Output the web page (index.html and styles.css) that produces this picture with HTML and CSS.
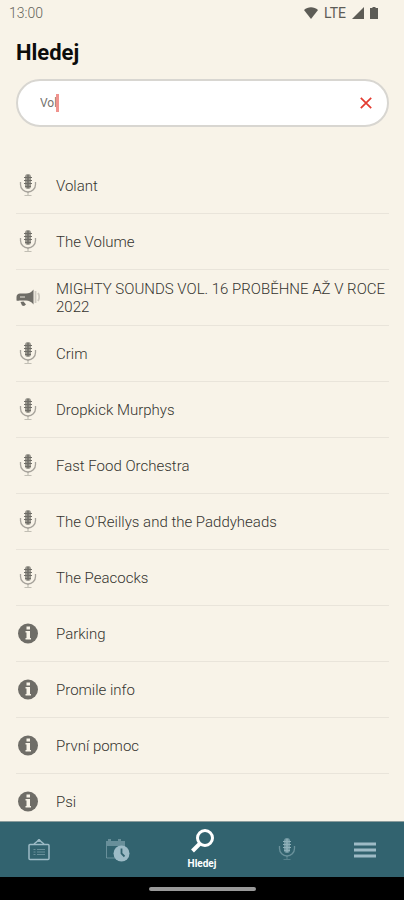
FILE: index.html
```
<!DOCTYPE html>
<html lang="cs">
<head>
<meta charset="utf-8">
<meta name="viewport" content="width=device-width, initial-scale=1">
<title>Hledej</title>
<link rel="stylesheet" href="styles.css">
</head>
<body>
<svg class="sprite" aria-hidden="true">
  <symbol id="mic" viewBox="0 0 24 24">
    <rect x="9" y="0" width="6" height="15" rx="3" fill="currentColor" opacity=".7"/>
    <path d="M12 1v13" stroke="currentColor" stroke-width="2" opacity=".7"/>
    <path d="M8 3.500h8M8 6.500h8M8 9.500h8M9 12.500h6" stroke="currentColor" stroke-width="1.200"/>
    <path d="M4.500 8v2.500a7.500 7.500 0 0 0 15 0V8" fill="none" stroke="currentColor" stroke-width="1.300" opacity=".6"/>
    <path d="M12 18v3.500M8.500 21.500h7" fill="none" stroke="currentColor" stroke-width="1.200" opacity=".4"/>
  </symbol>
  <symbol id="horn" viewBox="0 0 24 24">
    <path d="M4 7.500h6c3 0 5-1 7.500-4v15c-2.500-3-4.500-4-7.500-4H4c-1-.5-2 1-3.500 0V11C.5 9 2 7.500 4 7.500z" fill="currentColor"/>
    <path d="M4.500 16l3-.5 2.500 3-2 1.500-2-.5z" fill="currentColor"/>
    <path d="M4 11h5" stroke="#f8f3e8" stroke-width="1.500" opacity=".6"/>
    <path d="M19.500 5v12M22 7c1.500 2.500 1.500 5.500 0 8" fill="none" stroke="currentColor" stroke-width="1.800" opacity=".3"/>
  </symbol>
  <symbol id="info" viewBox="0 0 24 24">
    <circle cx="12" cy="11.500" r="10" fill="currentColor"/>
    <path d="M10.500 4.500h3.500v3h-3.500zM9.500 9h4.500v7h1v1.500H9.500V16h1v-5.500h-1z" fill="#f8f3e8"/>
  </symbol>
</svg>

<header class="status">
  <span>13:00</span>
  <span class="signals">
    <svg width="14" height="12" viewBox="0 0 14 12" aria-hidden="true"><path d="M0 3C4-.700 10-.700 14 3L7 12z" fill="#5d5c56"/></svg>
    <span class="network">LTE</span>
    <svg width="12" height="12" viewBox="0 0 12 12" aria-hidden="true"><path d="M12 0v12H0z" fill="#5d5c56"/></svg>
    <svg width="8" height="12" viewBox="0 0 8 12" aria-hidden="true"><path d="M2.500 0h3v1H8v11H0V1h2.500z" fill="#5d5c56"/></svg>
  </span>
</header>

<main class="content">
  <h1>Hledej</h1>
  <form class="search">
    <input type="text" id="query" value="Vol" aria-label="Hledej">
    <span class="caret"></span>
    <button type="button" class="clear" aria-label="Smazat">
      <svg width="12" height="12" viewBox="0 0 12 12" aria-hidden="true"><path d="M.8.800l10.400 10.400M11.200.800L.8 11.200" stroke="#e33b30" stroke-width="1.700"/></svg>
    </button>
  </form>
  <ul class="results">
    <li><svg class="icon"><use href="#mic"/></svg><span>Volant</span></li>
    <li><svg class="icon"><use href="#mic"/></svg><span>The Volume</span></li>
    <li><svg class="icon"><use href="#horn"/></svg><span>MIGHTY SOUNDS VOL. 16 PROBĚHNE AŽ V ROCE 2022</span></li>
    <li><svg class="icon"><use href="#mic"/></svg><span>Crim</span></li>
    <li><svg class="icon"><use href="#mic"/></svg><span>Dropkick Murphys</span></li>
    <li><svg class="icon"><use href="#mic"/></svg><span>Fast Food Orchestra</span></li>
    <li><svg class="icon"><use href="#mic"/></svg><span>The O'Reillys and the Paddyheads</span></li>
    <li><svg class="icon"><use href="#mic"/></svg><span>The Peacocks</span></li>
    <li><svg class="icon"><use href="#info"/></svg><span>Parking</span></li>
    <li><svg class="icon"><use href="#info"/></svg><span>Promile info</span></li>
    <li><svg class="icon"><use href="#info"/></svg><span>První pomoc</span></li>
    <li><svg class="icon"><use href="#info"/></svg><span>Psi</span></li>
  </ul>
</main>

<nav class="tabs">
  <a href="#news" aria-label="Novinky">
    <svg width="24" height="24" viewBox="0 0 24 24" fill="none" stroke="currentColor" aria-hidden="true"><rect x="2" y="6.500" width="20" height="15" rx="1" stroke-width="1.500"/><path d="M7 6l5-4 5 4" stroke-width="1.500"/><circle cx="12" cy="2.500" r="1.500" fill="currentColor" stroke="none"/><path d="M6.500 11.500h2M10 11.500h8M6.500 14h2M10 14h8M6.500 16.500h2M10 16.500h8" opacity=".5"/></svg>
  </a>
  <a href="#program" aria-label="Program">
    <svg width="26" height="24" viewBox="0 0 26 24" aria-hidden="true"><path d="M2 3h2V1h3v2h7V1h3v2h4v5H2z" fill="currentColor" opacity=".5"/><path d="M2.500 8v12h9M20.500 8v2" fill="none" stroke="currentColor" opacity=".5"/><circle cx="17.500" cy="15.500" r="8" fill="currentColor"/><path d="M17.500 10.500v5l3 3" fill="none" stroke="#32636f" stroke-width="1.800"/></svg>
  </a>
  <a href="#search" class="active">
    <svg width="24" height="24" viewBox="0 0 24 24" fill="none" stroke="currentColor" aria-hidden="true"><circle cx="15" cy="9" r="7.500" stroke-width="3"/><path d="M10 14.500L2.500 22" stroke-width="4"/></svg>
    <span>Hledej</span>
  </a>
  <a href="#artists" aria-label="Interpreti"><svg class="icon"><use href="#mic"/></svg></a>
  <a href="#menu" aria-label="Menu">
    <svg width="22" height="16" viewBox="0 0 22 16" aria-hidden="true"><path d="M0 2h22M0 8h22M0 14h22" stroke="currentColor" stroke-width="3"/></svg>
  </a>
</nav>
<footer class="system"><span class="handle"></span></footer>
</body>
</html>
```
FILE: styles.css
```
* { box-sizing: border-box; }

body {
  margin: 0;
  height: 100vh;
  display: flex;
  flex-direction: column;
  overflow: hidden;
  background: #f8f3e8;
  color: #35342f;
  font-family: Roboto, "Liberation Sans", sans-serif;
}

.sprite { position: absolute; width: 0; height: 0; }

.status {
  flex: none;
  display: flex;
  justify-content: space-between;
  align-items: center;
  height: 25px;
  padding: 0 26px 0 9px;
  font-size: 14px;
  font-weight: 300;
  color: #65635b;
}

.signals { display: flex; align-items: center; gap: 6px; }
.network { color: #5d5c56; font-weight: 400; }

.content {
  flex: 1;
  min-height: 0;
  overflow: hidden;
  padding: 14px 15px 0 16px;
}

h1 {
  margin: 0;
  font-size: 22px;
  line-height: 28px;
  font-weight: 700;
  color: #0c0c0b;
}

.search {
  display: flex;
  align-items: center;
  height: 48px;
  margin-top: 12px;
  padding: 0 15px 0 22px;
  background: #fff;
  border: 2px solid #d8d6d1;
  border-radius: 24px;
}

.search input {
  field-sizing: content;
  padding: 0;
  border: 0;
  outline: 0;
  background: none;
  color: #75736f;
  font: 12px/18px Roboto, "Liberation Sans", sans-serif;
}

.caret { width: 3px; height: 18px; margin-left: -1px; background: #f0938e; }

.clear {
  display: flex;
  margin-left: auto;
  padding: 0;
  border: 0;
  background: none;
}

.results { list-style: none; margin: 31px 0 0; padding: 0; }

.results li {
  display: flex;
  align-items: center;
  gap: 16px;
  height: 56px;
  border-bottom: 1px solid #e9e4da;
  font-size: 15px;
  line-height: 18px;
  font-weight: 300;
}

.icon { flex: none; width: 24px; height: 24px; color: #6f6d67; }

.tabs {
  flex: none;
  display: flex;
  height: 56px;
  background: #32636f;
  border-top: 1px solid #8b9c9c;
}

.tabs a {
  flex: 5;
  display: flex;
  flex-direction: column;
  align-items: center;
  justify-content: center;
  color: #9dbbc6;
  text-decoration: none;
}

.tabs .icon { color: #8fb0b9; }
.tabs .active { flex: 6; color: #fff; font-size: 10px; line-height: 14px; font-weight: 700; gap: 4px; }

.system {
  flex: none;
  display: flex;
  align-items: center;
  justify-content: center;
  height: 23px;
  background: #000;
}

.handle { width: 107px; height: 4px; border-radius: 2px; background: #999; }
```
